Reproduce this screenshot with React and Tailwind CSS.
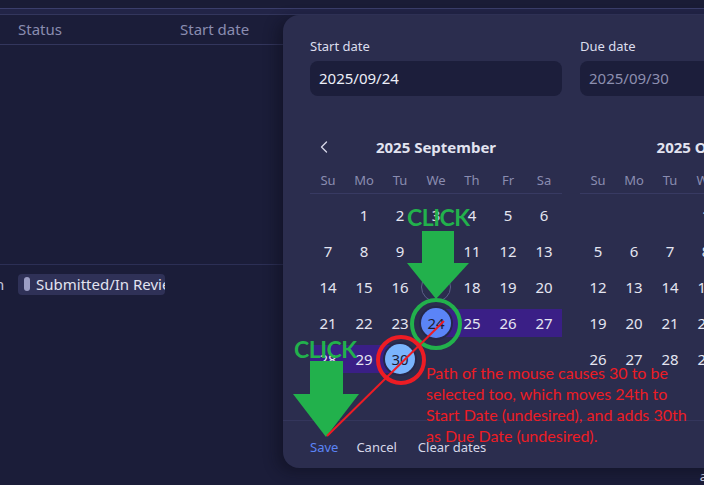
import { ChevronLeft } from 'lucide-react'

const WEEKDAYS = ['Su', 'Mo', 'Tu', 'We', 'Th', 'Fr', 'Sa']

const SEPT = [
  [null, 1, 2, 3, 4, 5, 6],
  [7, 8, 9, 10, 11, 12, 13],
  [14, 15, 16, 17, 18, 19, 20],
  [21, 22, 23, 24, 25, 26, 27],
  [28, 29, 30, null, null, null, null]
]

const OCT = [
  [null, null, null, 1, 2, 3, 4],
  [5, 6, 7, 8, 9, 10, 11],
  [12, 13, 14, 15, 16, 17, 18],
  [19, 20, 21, 22, 23, 24, 25],
  [26, 27, 28, 29, 30, 31, null]
]

function DayCell({ day, month }) {
  if (!day) return <div className="h-[36px]" />

  const isSept = month === 'sep'
  const inRange = isSept && day > 24 && day < 30
  const isStart = isSept && day === 24
  const isEnd = isSept && day === 30
  const isHover = isSept && day === 17

  // range band behind the numbers
  let band = ''
  if (inRange) band = 'bg-[#3a1f86]'
  if (isStart) band = 'bg-[linear-gradient(to_right,transparent_50%,#3a1f86_50%)]'
  if (isEnd) band = 'bg-[linear-gradient(to_right,#3a1f86_50%,transparent_50%)]'

  return (
    <div className="h-[36px] flex items-center">
      <div className={`h-[28px] w-full flex items-center justify-center ${band}`}>
        {isStart || isEnd ? (
          <div
            className={`w-[30px] h-[30px] rounded-full flex items-center justify-center text-[#1b1d39] shadow-[0_0_0_2px_#25274a] ${
              isStart ? 'bg-[#5b84f7]' : 'bg-[#7ab4fd]'
            }`}
          >
            {day}
          </div>
        ) : isHover ? (
          <div className="w-[30px] h-[30px] rounded-full border border-[#5c5f88] flex items-center justify-center">
            {day}
          </div>
        ) : (
          <span>{day}</span>
        )}
      </div>
    </div>
  )
}

function Month({ title, weeks, month, showPrev }) {
  return (
    <div className="w-[252px] shrink-0">
      <div className="h-[28px] flex items-center justify-center relative">
        {showPrev && (
          <ChevronLeft
            size={20}
            strokeWidth={1.6}
            className="absolute left-[4px] text-[#d6d7e8]"
          />
        )}
        <span className="text-[15px] font-bold text-[#e2e3f0] whitespace-nowrap">{title}</span>
      </div>
      <div className="mt-[7px] h-[26px] grid grid-cols-7 border-b border-[#383a62] text-[13px] text-[#8a8cb0]">
        {WEEKDAYS.map(d => (
          <div key={d} className="flex items-center justify-center">{d}</div>
        ))}
      </div>
      <div className="mt-[3px] grid grid-cols-7 text-[15px] text-[#e4e5f1]">
        {weeks.flat().map((d, i) => (
          <DayCell key={i} day={d} month={month} />
        ))}
      </div>
    </div>
  )
}

function DateField({ label, value, muted }) {
  return (
    <div className="w-[252px] shrink-0">
      <div className="text-[13px] leading-[18px] text-[#dcdded]">{label}</div>
      <div
        className={`mt-[6px] h-[35px] rounded-lg bg-[#1c1e3b] px-[9px] text-[15px] leading-[35px] ${
          muted ? 'text-[#8d8fb0]' : 'text-[#eceef8]'
        }`}
      >
        {value}
      </div>
    </div>
  )
}

function Annotations() {
  return (
    <>
      <svg className="absolute inset-0 pointer-events-none" width="704" height="485">
        {/* first arrow */}
        <rect x="422" y="231" width="32" height="33" fill="#22b14c" />
        <polygon points="407,263 469,263 436,299" fill="#22b14c" />
        <circle cx="436" cy="324" r="24" fill="none" stroke="#22b14c" strokeWidth="4" />
        {/* second arrow */}
        <rect x="310" y="361" width="33" height="34" fill="#22b14c" />
        <polygon points="293,394 359,394 326,437" fill="#22b14c" />
        <circle cx="401" cy="360" r="23" fill="none" stroke="#ed1c24" strokeWidth="4" />
        <line x1="327" y1="436" x2="444" y2="321" stroke="#ed1c24" strokeWidth="2" />
      </svg>
      <div className="absolute left-[407px] top-[204px] text-[23px] leading-[26px] font-bold tracking-[-0.5px] text-[#22b14c] font-['Lato',sans-serif]">
        CLICK
      </div>
      <div className="absolute left-[294px] top-[336px] text-[23px] leading-[26px] font-bold tracking-[-0.5px] text-[#22b14c] font-['Lato',sans-serif]">
        CLICK
      </div>
      <div className="absolute left-[426px] top-[362px] text-[16px] leading-[21px] text-[#ed1c24] font-['Lato',sans-serif] whitespace-nowrap">
        <div>Path of the mouse causes 30 to be</div>
        <div>selected too, which moves 24th to</div>
        <div>Start Date (undesired), and adds 30th</div>
        <div>as Due Date (undesired).</div>
      </div>
    </>
  )
}

export default function App() {
  return (
    <div className="relative w-[704px] h-[485px] overflow-hidden bg-[#1b1d39] font-['Noto_Sans',sans-serif]">
      {/* top chrome */}
      <div className="h-[9px] bg-[#1a1c36] border-b border-[#3b3e6b]" />
      <div className="h-[6px] bg-[#222447] border-b border-[#33365d]" />

      {/* table header */}
      <div className="h-[30px] flex items-center border-b border-[#33365d] text-[15px] text-[#8a8cb0]">
        <div className="w-[180px] pl-[18px]">Status</div>
        <div>Start date</div>
      </div>

      <div className="h-[220px] border-b border-[#2c2f55]" />

      {/* row */}
      <div className="h-[38px] flex items-center text-[15px] text-[#e2e3f0]">
        <span className="-ml-[5px] w-[23px] text-[#c4c5da]">n</span>
        <div className="w-[147px] h-[21px] overflow-hidden rounded bg-[#2f3157] flex items-center gap-[6px] pl-[6px] whitespace-nowrap">
          <span className="w-[6px] h-[14px] rounded-full bg-[#9c9ec4] shrink-0" />
          <span>Submitted/In Review</span>
        </div>
      </div>

      <div className="mt-[168px] flex justify-end text-[13px] leading-[10px] text-[#dcdded]">
        <span className="-mr-[3px]">a</span>
      </div>

      {/* date range popover */}
      <div className="absolute left-[283px] top-[15px] w-[470px] h-[453px] rounded-2xl bg-[#2b2d4e] shadow-[-6px_4px_14px_rgba(10,10,25,0.45)]">
        <div className="pt-[22px] pl-[27px] flex gap-[18px]">
          <DateField label="Start date" value="2025/09/24" />
          <DateField label="Due date" value="2025/09/30" muted />
        </div>

        <div className="mt-[37px] pl-[27px] flex gap-[18px]">
          <Month title="2025 September" weeks={SEPT} month="sep" showPrev />
          <Month title="2025 October" weeks={OCT} month="oct" />
        </div>

        <div className="mt-[43px] border-t border-[#34365c] pt-[17px] pl-[27px] flex gap-[18px] text-[13px] leading-[18px]">
          <button className="text-[#5b84f7]">Save</button>
          <button className="text-[#d6d7e8]">Cancel</button>
          <button className="ml-[3px] text-[#d6d7e8]">Clear dates</button>
        </div>
      </div>

      <Annotations />
    </div>
  )
}
